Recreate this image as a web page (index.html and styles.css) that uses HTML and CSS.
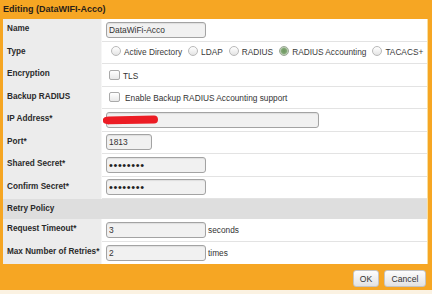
FILE: index.html
```html
<!DOCTYPE html>
<html>
<head>
<meta charset="utf-8">
<link rel="stylesheet" href="styles.css">
</head>
<body>
<div class="dialog">
  <div class="title">Editing (DataWIFI-Acco)</div>
  <div class="main">
    <div class="row">
      <div class="label">Name</div>
      <div class="value"><input class="field" type="text" value="DataWiFi-Acco"></div>
    </div>
    <div class="row">
      <div class="label">Type</div>
      <div class="value radios">
        <span class="opt"><span class="radio"></span>Active Directory</span>
        <span class="opt"><span class="radio"></span>LDAP</span>
        <span class="opt"><span class="radio"></span>RADIUS</span>
        <span class="opt"><span class="radio checked"></span>RADIUS Accounting</span>
        <span class="opt"><span class="radio"></span>TACACS+</span>
      </div>
    </div>
    <div class="row">
      <div class="label">Encryption</div>
      <div class="value"><span class="check"></span><span class="ctext">TLS</span></div>
    </div>
    <div class="row">
      <div class="label">Backup RADIUS</div>
      <div class="value"><span class="check"></span><span class="ctext wide">Enable Backup RADIUS Accounting support</span></div>
    </div>
    <div class="row">
      <div class="label">IP Address*</div>
      <div class="value ip"><input class="field long" type="text" value=""><span class="redact"></span></div>
    </div>
    <div class="row">
      <div class="label">Port*</div>
      <div class="value"><input class="field short" type="text" value="1813"></div>
    </div>
    <div class="row">
      <div class="label">Shared Secret*</div>
      <div class="value"><input class="field pw" type="password" value="12345678"></div>
    </div>
    <div class="row">
      <div class="label">Confirm Secret*</div>
      <div class="value"><input class="field pw" type="password" value="12345678"></div>
    </div>
    <div class="row section">
      <div class="label">Retry Policy</div>
    </div>
    <div class="row">
      <div class="label">Request Timeout*</div>
      <div class="value"><input class="field" type="text" value="3"><span class="unit">seconds</span></div>
    </div>
    <div class="row last">
      <div class="label">Max Number of Retries*</div>
      <div class="value"><input class="field" type="text" value="2"><span class="unit">times</span></div>
    </div>
  </div>
  <div class="footer">
    <button class="btn ok">OK</button>
    <button class="btn cancel">Cancel</button>
  </div>
</div>
</body>
</html>
```
FILE: styles.css
```css
html, body {
  margin: 0;
  padding: 0;
  background: #fbf2e2;
  font-family: "Liberation Sans", Arial, sans-serif;
  color: #333;
}
.dialog {
  width: 432px;
  height: 290px;
  background: #f6a623;
  display: flex;
  flex-direction: column;
}
.title {
  height: 19px;
  line-height: 19px;
  padding-left: 3px;
  font-size: 9px;
  font-weight: bold;
  color: #2a2118;
}
.main {
  margin: 0 4px 0 3px;
  background: #fff;
  height: 245px;
  display: flex;
  flex-direction: column;
  border-right: 1px solid #f9df9f;
}
.row {
  display: flex;
  height: 22.5px;
  flex: none;
}
.label {
  width: 99px;
  flex: none;
  background: #ececec;
  font-size: 8.2px;
  font-weight: bold;
  line-height: 12px;
  padding: 4px 0 0 4px;
  box-sizing: border-box;
  color: #2a2a2a;
  border-right: 1px solid #f6f6f6;
}
.value {
  flex: 1;
  display: flex;
  align-items: center;
  padding-left: 4px;
  border-bottom: 1px solid #e3e3e3;
  box-sizing: border-box;
  font-size: 8.3px;
  white-space: nowrap;
  overflow: hidden;
  min-width: 0;
}
.row.last .value {
  border-bottom: none;
}
.row.section {
  height: 20px;
  background: #dedede;
}
.row.section .label {
  background: #dedede;
  border-right: none;
}
.field {
  width: 100px;
  height: 16px;
  box-sizing: border-box;
  border: 1px solid #a3a3a3;
  border-radius: 3px;
  background: #f1f1f1;
  box-shadow: inset 0 1px 1px rgba(0,0,0,0.08);
  font-family: "Liberation Sans", Arial, sans-serif;
  font-size: 8.4px;
  color: #333;
  padding: 0 0 0 2px;
  margin: 0;
  outline: none;
}
.field.long { width: 213px; }
.field.short { width: 46px; }
.field.pw {
  font-size: 11px;
  letter-spacing: 0.6px;
  color: #222;
}
.ip { position: relative; }
.redact {
  position: absolute;
  left: 1px;
  top: 7px;
  width: 55px;
  height: 8px;
  background: #ec1c24;
  border-radius: 6px 4px 4px 6px / 3px 4px 4px 3px;
  transform: rotate(-1deg);
}
.radios { padding-left: 9px; }
.opt {
  display: inline-flex;
  align-items: center;
  margin-right: 6px;
  color: #3a3a3a;
}
.opt:last-child { margin-right: 0; }
.radio {
  width: 10px;
  height: 10px;
  box-sizing: border-box;
  border: 1px solid #b9b9b9;
  border-radius: 50%;
  background: linear-gradient(#ffffff, #e4e4e4);
  margin-right: 3px;
  margin-top: -2px;
  flex: none;
}
.radio.checked {
  border-color: #9aa894;
  background: radial-gradient(circle, #6d9560 0, #7fa672 2.5px, #b6c8ae 3.5px, #e9ede6 5px);
}
.check {
  width: 11px;
  height: 10px;
  box-sizing: border-box;
  border: 1px solid #aaa;
  border-radius: 2px;
  background: linear-gradient(#ffffff, #e8e8e8);
  margin-left: 3px;
  flex: none;
}
.ctext {
  margin-left: 3px;
  margin-top: 3px;
  color: #333;
}
.ctext.wide { margin-left: 5px; margin-top: 2px; }
.unit {
  margin-left: 2px;
  color: #333;
}
.footer {
  flex: 1;
  display: flex;
  justify-content: flex-end;
  align-items: center;
  padding: 3px 6px 0 0;
  gap: 5px;
}
.btn {
  height: 17px;
  box-sizing: border-box;
  border: 1px solid #c4c4c4;
  border-radius: 3px;
  background: linear-gradient(#fdfdfd, #e2e2e2);
  font-family: "Liberation Sans", Arial, sans-serif;
  font-size: 8.6px;
  color: #333;
  padding: 0;
  margin: 0;
}
.btn.ok { width: 26px; }
.btn.cancel { width: 42px; }
```
